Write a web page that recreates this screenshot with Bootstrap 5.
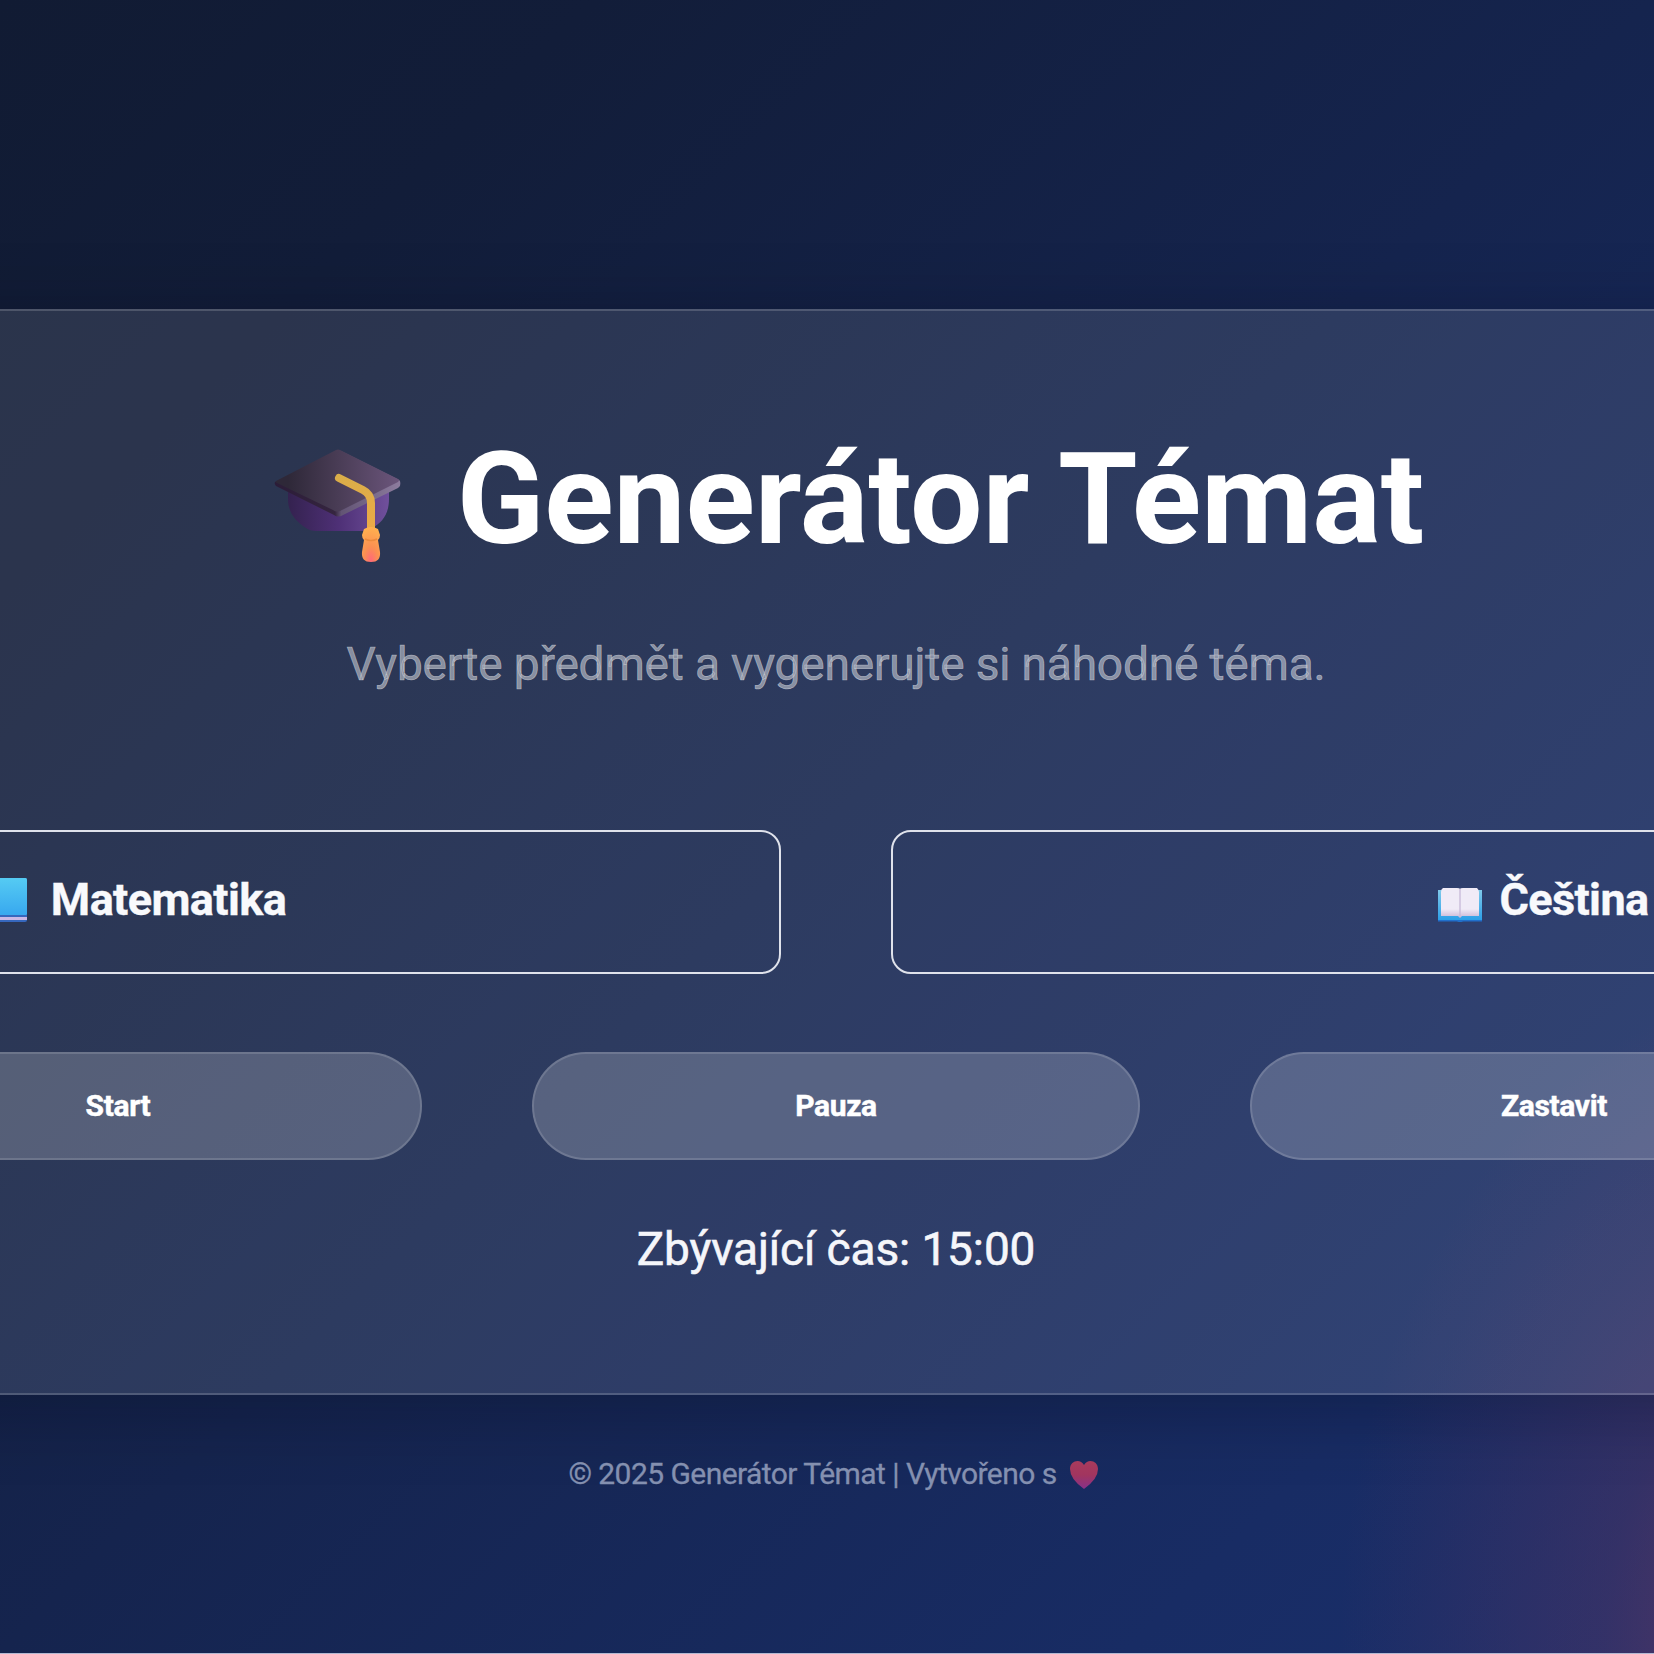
<!DOCTYPE html>
<html lang="cs">
<head>
<meta charset="utf-8">
<meta name="viewport" content="width=device-width, initial-scale=1">
<title>Generátor Témat</title>
<link href="https://cdn.jsdelivr.net/npm/bootstrap@5.3.0/dist/css/bootstrap.min.css" rel="stylesheet">
<style>
  body {
    font-family: Roboto, "Liberation Sans", sans-serif;
    height: 1654px;
    color: #fff;
    border-bottom: 1px solid #b3b9d2;
    background:
      radial-gradient(ellipse 480px 660px at 1820px 1640px, rgba(146, 62, 92, .58) 0%, rgba(115, 56, 96, .29) 45%, rgba(60, 46, 104, 0) 100%),
      linear-gradient(135deg, #111b33 0%, #121d39 18%, #15244e 50%, #182c64 84%, #1a2f6c 100%);
  }
  .glass-panel {
    flex: none;
    width: 2950px;
    height: 1086px;
    margin: 309px 0 0 -639px;
    padding: 118px 119px 0;
    background: rgba(255, 255, 255, .107);
    border: 2px solid rgba(255, 255, 255, .17);
    border-radius: 40px;
  }
  .panel-shade { box-shadow: 0 12px 75px rgba(2, 5, 22, .3); }
  .app-title { font-size: 128.500px; line-height: 140px; letter-spacing: -.1px; margin-left: 26px; }
  .cap-icon { margin-top: 13px; }
  .title-text { margin-left: 55px; }
  .app-intro { font-size: 46px; line-height: 60px; letter-spacing: -.16px; margin-top: 65px; color: rgba(255, 255, 255, .46); -webkit-text-stroke: .6px; }
  .subject-row { gap: 110px; margin-top: 136px; }
  .subject-btn {
    height: 144px; border: 2px solid #dfe2eb; border-radius: 20px;
    color: #f8f9fc; font-size: 45px; letter-spacing: -.6px; padding: 0 0 4px 6px; -webkit-text-stroke: .4px;
  }
  .subject-btn svg { margin-bottom: 3px; }
  .open-book { margin-right: 17px; }
  .control-row { width: 2044px; gap: 110px; margin-top: 78px; }
  .control-btn {
    height: 108px; border: 2px solid rgba(255, 255, 255, .14);
    background: rgba(255, 255, 255, .2); background-clip: border-box;
    color: #fff; font-size: 30px; letter-spacing: -.35px; padding-bottom: 8px; -webkit-text-stroke: .5px;
  }
  .time-left { font-size: 46px; line-height: 60px; letter-spacing: -.12px; margin-top: 59px; color: #f5f6fa; -webkit-text-stroke: .6px; }
  .app-footer { font-size: 30px; line-height: 40px; margin: 59px 0 0 13px; color: #8490b0; letter-spacing: -.55px; -webkit-text-stroke: .3px; }
  .heart-icon { margin-left: 12px; }
</style>
</head>
<body class="overflow-hidden">
<div class="d-flex">
  <main class="glass-panel panel-shade d-flex flex-column align-items-center">
    <h1 class="app-title fw-bold mb-0 d-flex align-items-center text-nowrap">
      <svg class="cap-icon" width="128" height="114" viewBox="0 0 128 114" aria-hidden="true">
        <defs>
          <linearGradient id="capTop" x1="0" x2="1"><stop offset=".1" stop-color="#2e2838"/><stop offset=".5" stop-color="#493c55"/><stop offset="1" stop-color="#6b557b"/></linearGradient>
          <linearGradient id="capBase" x1="0" x2="1"><stop offset="0" stop-color="#34224f"/><stop offset=".5" stop-color="#4e3076"/><stop offset="1" stop-color="#70509c"/></linearGradient>
          <linearGradient id="capEdge" x1="0" x2="1"><stop offset="0" stop-color="#2b1c38"/><stop offset=".48" stop-color="#35253f"/><stop offset=".53" stop-color="#625474"/><stop offset="1" stop-color="#8d7c9e"/></linearGradient>
          <linearGradient id="cord" gradientUnits="userSpaceOnUse" x1="0" y1="25" x2="0" y2="86"><stop offset="0" stop-color="#d9ad49"/><stop offset="1" stop-color="#efa947"/></linearGradient>
          <radialGradient id="tassel" cx=".5" cy=".95" r=".95"><stop offset="0" stop-color="#ff6a78"/><stop offset=".4" stop-color="#fb8f52"/><stop offset="1" stop-color="#ffb04f"/></radialGradient>
        </defs>
        <path d="M14 43h101v7c0 15-7 24-17 29q-4 3-10 3H42q-6 0-10-3C21 72 14 63 14 50z" fill="url(#capBase)"/>
        <path d="M1 33 64 2q1-1 3 0l58 29q2 1 1 6l-2 2-55 27q-5 3-9 0L2 37q-2-2-1-4z" fill="url(#capEdge)"/>
        <path d="M2 32 62 1q2-1 4 0l58 29q2 1 0 3L68 61q-5 3-9 0L3 34q-2-1-1-2z" fill="url(#capTop)"/>
        <path d="M65 29l24 12q8 4 8 13v32" fill="none" stroke="url(#cord)" stroke-width="8" stroke-linecap="round"/>
        <path d="M90 80q7-4 14 0l2 6q0 3-2 5l2 12q1 10-9 10t-9-10l2-12q-2-2-2-5z" fill="url(#tassel)"/>
        <path d="M91 90q6 3 12 0" fill="none" stroke="#ec8a3e" stroke-width="1.5"/>
      </svg>
      <span class="title-text">Generátor Témat</span>
    </h1>
    <p class="app-intro mb-0 text-nowrap">Vyberte předmět a vygenerujte si náhodné téma.</p>

    <div class="subject-row d-flex w-100">
      <button type="button" class="subject-btn btn flex-fill w-50 fw-bold d-flex align-items-center justify-content-center">
        <svg class="me-4" width="44" height="46" viewBox="0 0 44 46" aria-hidden="true">
          <defs><linearGradient id="blueBook" x2="0" y2="1"><stop offset="0" stop-color="#55cbf3"/><stop offset="1" stop-color="#38a8ef"/></linearGradient></defs>
          <rect y="2" width="44" height="44" rx="2" fill="#3667bd"/>
          <rect x="3" y="41" width="41" height="3" fill="#c9b8e6"/>
          <rect y="2" width="44" height="37" rx="1.500" fill="url(#blueBook)"/>
        </svg>
        <span>Matematika</span>
      </button>
      <button type="button" class="subject-btn btn flex-fill w-50 fw-bold d-flex align-items-center justify-content-center">
        <svg class="open-book" width="44" height="46" viewBox="0 0 44 46" aria-hidden="true">
          <defs>
            <linearGradient id="cover" x2="0" y2="1"><stop offset="0" stop-color="#80c9ea"/><stop offset="1" stop-color="#279de8"/></linearGradient>
            <linearGradient id="pages" x2="0" y2="1"><stop offset=".7" stop-color="#f0ebf7"/><stop offset="1" stop-color="#c9b6d6"/></linearGradient>
          </defs>
          <path d="M0 14h44v31H25l-3 1-3-1H0z" fill="url(#cover)"/>
          <path d="M0 44h44v1.500H25l-3 .5-3-.5H0z" fill="#216fcb"/>
          <path d="M5 12h14q3 0 3 1 0-1 3-1h14q2 2 2 4v24H24l-2 2-2-2H3V16q0-3 2-4z" fill="url(#pages)"/>
          <path d="M22 13v28" stroke="#c6b8d8" stroke-width="1.300"/>
        </svg>
        <span>Čeština</span>
      </button>
    </div>

    <div class="control-row d-flex">
      <button type="button" class="control-btn btn rounded-pill flex-fill w-100 fw-bold">Start</button>
      <button type="button" class="control-btn btn rounded-pill flex-fill w-100 fw-bold">Pauza</button>
      <button type="button" class="control-btn btn rounded-pill flex-fill w-100 fw-bold">Zastavit</button>
    </div>

    <p class="time-left mb-0 text-nowrap">Zbývající čas: 15:00</p>
  </main>
</div>
<footer class="app-footer d-flex justify-content-center align-items-center">
  <span>© 2025 Generátor Témat | Vytvořeno s</span>
  <svg class="heart-icon" width="30" height="30" viewBox="0 0 30 30" aria-hidden="true">
    <defs><linearGradient id="love" x2="0" y2="1"><stop offset="0" stop-color="#a83b5c"/><stop offset=".5" stop-color="#a1355f"/><stop offset="1" stop-color="#87318a"/></linearGradient></defs>
    <path d="M15 30Q1 20 1 10C1 2 11-1 15 6c4-7 14-4 14 4q0 10-14 20z" fill="url(#love)"/>
  </svg>
</footer>
<script src="https://cdn.jsdelivr.net/npm/bootstrap@5.3.0/dist/js/bootstrap.bundle.min.js"></script>
</body>
</html>
